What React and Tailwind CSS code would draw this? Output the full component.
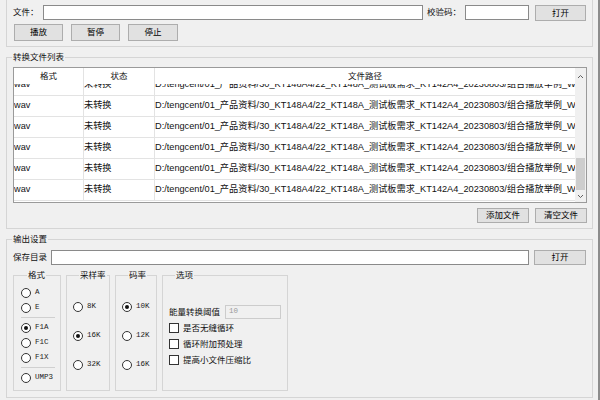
import clsx from "clsx";

const PATH =
  "D:/tengcent/01_产品资料/30_KT148A4/22_KT148A_测试板需求_KT142A4_20230803/组合播放举例_WAV_完整版/01.wav";

function Btn({ children, className }) {
  return (
    <button
      className={clsx(
        "flex items-center justify-center border border-[#adadad] bg-[#e1e1e1] text-[8.5px] leading-none text-black",
        className
      )}
    >
      {children}
    </button>
  );
}

function Radio({ label, checked }) {
  return (
    <div className="flex h-[15px] items-center">
      <span className="flex h-[10px] w-[10px] items-center justify-center rounded-full border border-[#333] bg-white">
        {checked && <span className="h-[4px] w-[4px] rounded-full bg-[#111]" />}
      </span>
      <span className="ml-[4px] font-['Liberation_Mono',monospace] text-[7.5px] leading-none text-[#222]">
        {label}
      </span>
    </div>
  );
}

function Check({ label }) {
  return (
    <div className="flex h-[16px] items-center">
      <span className="h-[10px] w-[10px] border border-[#333] bg-white" />
      <span className="ml-[4px] text-[8.5px] leading-none">{label}</span>
    </div>
  );
}

function Row() {
  return (
    <div className="flex h-[21px] items-center border-b border-[#e3e3e3] text-[9.2px] leading-none">
      <div className="flex h-full w-[70px] shrink-0 items-center border-r border-[#e3e3e3]">wav</div>
      <div className="flex h-full w-[71px] shrink-0 items-center border-r border-[#e3e3e3]">未转换</div>
      <div className="flex h-full min-w-0 flex-1 items-center overflow-hidden whitespace-nowrap">{PATH}</div>
    </div>
  );
}

export default function App() {
  return (
    <div className="h-[400px] w-[600px] overflow-hidden border-r-2 border-[#8c8c8c] bg-[#f0f0f0] pl-[6px] pr-[5px] font-['Liberation_Sans','Noto_Sans_CJK_SC',sans-serif] text-[#111]">
      {/* file / playback */}
      <div className="h-[47px] border-x border-b border-[#d5d5d5] pt-[5px]">
        <div className="flex h-[16px] items-start">
          <span className="ml-[6px] w-[30px] text-[8.5px] leading-[15px]">文件：</span>
          <div className="h-[15px] w-[380px] border border-[#8a8a8a] bg-white" />
          <span className="ml-[4px] w-[38px] text-[8.5px] leading-[15px]">校验码：</span>
          <div className="h-[15px] w-[64px] border border-[#8a8a8a] bg-white" />
          <Btn className="ml-[6px] h-[16px] w-[51px]">打开</Btn>
        </div>
        <div className="ml-[7px] mt-[3px] flex gap-[8px]">
          <Btn className="h-[17px] w-[49px]">播放</Btn>
          <Btn className="h-[17px] w-[49px]">暂停</Btn>
          <Btn className="h-[17px] w-[50px]">停止</Btn>
        </div>
      </div>

      {/* file list */}
      <fieldset className="mt-[4px] min-w-0 border border-[#d5d5d5] pb-[5px]">
        <legend className="ml-[5px] px-px text-[8.5px] leading-[12px]">转换文件列表</legend>
        <div className="ml-[6px] mr-[5px] mt-[4px] flex h-[136px] border border-[#9a9a9a] bg-white">
          <div className="flex min-w-0 flex-1 flex-col overflow-hidden">
            <div className="flex h-[16px] shrink-0 text-[8.5px] leading-none">
              <div className="flex w-[70px] shrink-0 items-center justify-center border-r border-[#e3e3e3]">格式</div>
              <div className="flex w-[71px] shrink-0 items-center justify-center border-r border-[#e3e3e3]">状态</div>
              <div className="flex min-w-0 flex-1 items-center justify-center">文件路径</div>
            </div>
            <div className="min-h-0 flex-1 overflow-hidden">
              <div className="-mt-[9px]">
                <Row />
                <Row />
                <Row />
                <Row />
                <Row />
                <Row />
              </div>
            </div>
          </div>
          <div className="flex w-[11px] shrink-0 flex-col bg-[#f0f0f0]">
            <div className="flex h-[16px] items-center justify-center">
              <svg width="7" height="5" viewBox="0 0 7 5">
                <polyline points="1,4 3.5,1.5 6,4" fill="none" stroke="#606060" strokeWidth="1" />
              </svg>
            </div>
            <div className="flex flex-1 flex-col justify-end px-px">
              <div className="h-[32px] bg-[#cdcdcd]" />
            </div>
            <div className="flex h-[12px] items-center justify-center">
              <svg width="7" height="5" viewBox="0 0 7 5">
                <polyline points="1,1 3.5,3.5 6,1" fill="none" stroke="#606060" strokeWidth="1" />
              </svg>
            </div>
          </div>
        </div>
        <div className="mt-[5px] flex justify-end gap-[6px] pr-[5px]">
          <Btn className="h-[15px] w-[52px]">添加文件</Btn>
          <Btn className="h-[15px] w-[52px]">清空文件</Btn>
        </div>
      </fieldset>

      {/* output settings */}
      <fieldset className="mt-[4px] min-w-0 border border-[#d5d5d5] pb-[6px]">
        <legend className="ml-[5px] px-px text-[8.5px] leading-[12px]">输出设置</legend>
        <div className="mt-[5px] flex h-[15px] items-center">
          <span className="ml-[6px] w-[38px] text-[8.5px] leading-none">保存目录</span>
          <div className="h-[15px] w-[478px] border border-[#8a8a8a] bg-white" />
          <Btn className="ml-[5px] h-[15px] w-[52px]">打开</Btn>
        </div>
        <div className="ml-[6px] mt-[4px] flex h-[122px] gap-[5px]">
          <fieldset className="w-[48px] min-w-0 border border-[#d5d5d5] pl-[7px] pt-[4px]">
            <legend className="ml-[6px] px-px text-[8.5px] leading-[12px]">格式</legend>
            <Radio label="A" />
            <Radio label="E" />
            <div className="my-[2px] h-px w-[34px] bg-[#d0d0d0]" />
            <Radio label="F1A" checked />
            <Radio label="F1C" />
            <Radio label="F1X" />
            <div className="my-[2px] h-px w-[34px] bg-[#d0d0d0]" />
            <Radio label="UMP3" />
          </fieldset>
          <fieldset className="w-[44px] min-w-0 border border-[#d5d5d5] pl-[6px] pt-[18px]">
            <legend className="ml-[6px] px-px text-[8.5px] leading-[12px]">采样率</legend>
            <div className="flex flex-col gap-[14px]">
              <Radio label="8K" />
              <Radio label="16K" checked />
              <Radio label="32K" />
            </div>
          </fieldset>
          <fieldset className="w-[42px] min-w-0 border border-[#d5d5d5] pl-[6px] pt-[18px]">
            <legend className="ml-[6px] px-px text-[8.5px] leading-[12px]">码率</legend>
            <div className="flex flex-col gap-[14px]">
              <Radio label="10K" checked />
              <Radio label="12K" />
              <Radio label="16K" />
            </div>
          </fieldset>
          <fieldset className="w-[126px] min-w-0 border border-[#d5d5d5] pl-[6px] pt-[24px]">
            <legend className="ml-[6px] px-px text-[8.5px] leading-[12px]">选项</legend>
            <div className="flex h-[14px] items-center">
              <span className="text-[8.5px] leading-none">能量转换阈值</span>
              <div className="ml-[5px] flex h-[14px] w-[56px] items-center border border-[#cccccc] bg-[#f0f0f0] pl-[3px] font-['Liberation_Mono',monospace] text-[7.5px] text-[#9a9a9a]">
                10
              </div>
            </div>
            <div className="mt-px">
              <Check label="是否无缝循环" />
              <Check label="循环附加预处理" />
              <Check label="提高小文件压缩比" />
            </div>
          </fieldset>
        </div>
      </fieldset>
    </div>
  );
}
